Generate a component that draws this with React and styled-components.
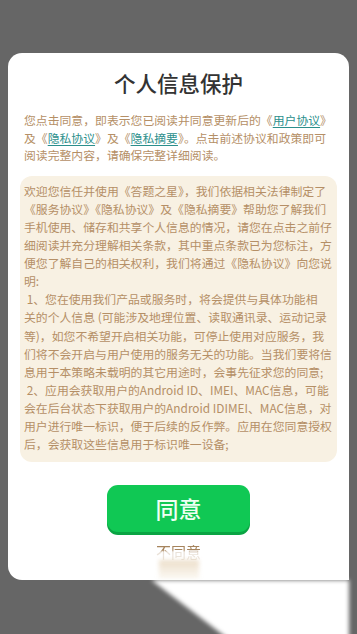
import React from "react";
import styled, { createGlobalStyle } from "styled-components";

const GlobalStyle = createGlobalStyle`
  html, body {
    margin: 0;
    padding: 0;
    background: #666666;
    font-family: "Noto Sans CJK SC", "Noto Sans", sans-serif;
  }
`;

const Page = styled.div`
  width: 357px;
  height: 634px;
  overflow: hidden;
  padding: 53px 8px 0;
  box-sizing: border-box;
  background: #666666;
`;

const Card = styled.div`
  background: #fff;
  border-radius: 14px 14px 0 14px;
  height: 527px;
  display: flex;
  flex-direction: column;
  align-items: center;
  padding: 15px 12px 0;
  box-sizing: border-box;
`;

const Title = styled.div`
  font-size: 21.5px;
  line-height: 30px;
  font-weight: 500;
  color: #333;
`;

const Intro = styled.div`
  align-self: stretch;
  margin-top: 13px;
  padding-left: 4px;
  font-size: 11.85px;
  line-height: 17.6px;
  color: #b58f66;
  white-space: nowrap;
`;

const LinkText = styled.span`
  color: #2b8f8c;
  text-decoration: underline;
  text-underline-offset: 2px;
`;

const NoticeBox = styled.div`
  align-self: stretch;
  margin-top: 12px;
  background: #f8f1e3;
  border-radius: 12px;
  padding: 6px 4px 8px;
  height: 286px;
  box-sizing: border-box;
  font-size: 11.85px;
  line-height: 18.1px;
  color: #b58f66;
`;

const Line = styled.div`
  white-space: pre;
`;

const AgreeButton = styled.button`
  margin-top: 23px;
  width: 143px;
  height: 47px;
  border: none;
  border-radius: 11px;
  background: #10c854;
  box-shadow: 0 3px 0 #0aa443;
  color: #effff3;
  font-family: inherit;
  font-size: 23px;
  font-weight: 500;
  flex-shrink: 0;
`;

const RefuseText = styled.div`
  margin-top: 12px;
  font-size: 15px;
  line-height: 16px;
  color: #a6845d;
  flex-shrink: 0;
  -webkit-mask-image: linear-gradient(to bottom, #000 0, #000 6px, rgba(0,0,0,0.25) 8px, rgba(0,0,0,0.2) 100%);
  mask-image: linear-gradient(to bottom, #000 0, #000 6px, rgba(0,0,0,0.25) 8px, rgba(0,0,0,0.2) 100%);
  filter: blur(0.3px);
`;

const Smear = styled.div`
  width: 40px;
  height: 20px;
  background: linear-gradient(to bottom, rgba(214, 184, 138, 0.45), rgba(235, 215, 180, 0.12));
  filter: blur(2px);
`;

const GhostWrap = styled.div`
  height: 60px;
  filter: blur(2px);
`;

const Ghost = styled.div`
  height: 100%;
  background: #fff;
  clip-path: polygon(42% 0, 100% 0, 100% 100%, 65% 100%);
`;

const introLines = [
  <>您点击同意，即表示您已阅读并同意更新后的《<LinkText>用户协议</LinkText>》</>,
  <>及《<LinkText>隐私协议</LinkText>》及《<LinkText>隐私摘要</LinkText>》。点击前述协议和政策即可</>,
  <>阅读完整内容，请确保完整详细阅读。</>,
];

const noticeLines = [
  "欢迎您信任并使用《答题之星》，我们依据相关法律制定了",
  "《服务协议》《隐私协议》及《隐私摘要》帮助您了解我们",
  "手机使用、储存和共享个人信息的情况，请您在点击之前仔",
  "细阅读并充分理解相关条款，其中重点条款已为您标注，方",
  "便您了解自己的相关权利，我们将通过《隐私协议》向您说",
  "明:",
  " 1、您在使用我们产品或服务时，将会提供与具体功能相",
  "关的个人信息 (可能涉及地理位置、读取通讯录、运动记录",
  "等)，如您不希望开启相关功能，可停止使用对应服务，我",
  "们将不会开启与用户使用的服务无关的功能。当我们要将信",
  "息用于本策略未载明的其它用途时，会事先征求您的同意;",
  " 2、应用会获取用户的Android ID、IMEI、MAC信息，可能",
  "会在后台状态下获取用户的Android IDIMEI、MAC信息，对",
  "用户进行唯一标识，便于后续的反作弊。应用在您同意授权",
  "后，会获取这些信息用于标识唯一设备;",
];

export default function App() {
  return (
    <>
      <GlobalStyle />
      <Page>
        <Card>
          <Title>个人信息保护</Title>
          <Intro>
            {introLines.map((l, i) => (
              <Line key={i}>{l}</Line>
            ))}
          </Intro>
          <NoticeBox>
            {noticeLines.map((l, i) => (
              <Line key={i}>{l}</Line>
            ))}
          </NoticeBox>
          <AgreeButton>同意</AgreeButton>
          <RefuseText>不同意</RefuseText>
          <Smear />
        </Card>
        <GhostWrap>
          <Ghost />
        </GhostWrap>
      </Page>
    </>
  );
}
